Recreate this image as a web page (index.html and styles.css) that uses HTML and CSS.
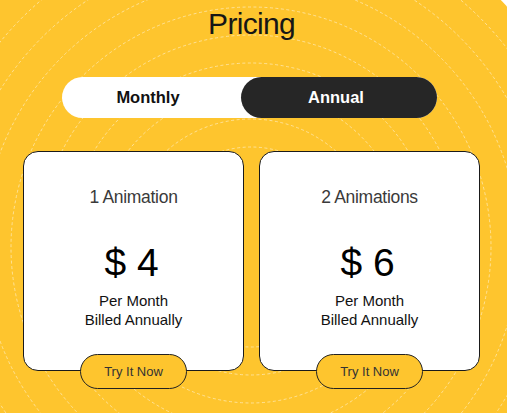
FILE: index.html
```html
<!DOCTYPE html>
<html lang="en">
<head>
<meta charset="utf-8">
<title>Pricing</title>
<link rel="stylesheet" href="styles.css">
</head>
<body>
<svg class="backdrop" width="507" height="413" viewBox="0 0 507 413" aria-hidden="true">
  <circle cx="250" cy="247" r="352" fill="#fec52e"/>
  <g fill="none" stroke="#fff" stroke-width="0.7" stroke-dasharray="3 2.5" opacity="0.7">
    <circle cx="251" cy="247" r="100"/>
    <circle cx="251" cy="247" r="128"/>
    <circle cx="251" cy="247" r="156"/>
    <circle cx="251" cy="247" r="184"/>
    <circle cx="251" cy="247" r="212"/>
    <circle cx="251" cy="247" r="240"/>
    <circle cx="251" cy="247" r="268"/>
    <circle cx="251" cy="247" r="296"/>
    <circle cx="251" cy="247" r="324"/>
  </g>
</svg>
<main class="page">
  <h1 class="title">Pricing</h1>
  <div class="toggle">
    <button class="toggle-btn">Monthly</button>
    <button class="toggle-btn active">Annual</button>
  </div>
  <section class="cards">
    <article class="card">
      <h2 class="plan">1 Animation</h2>
      <div class="price">$ 4</div>
      <p class="note">Per Month<br>Billed Annually</p>
      <button class="try">Try It Now</button>
    </article>
    <article class="card">
      <h2 class="plan">2 Animations</h2>
      <div class="price">$ 6</div>
      <p class="note">Per Month<br>Billed Annually</p>
      <button class="try">Try It Now</button>
    </article>
  </section>
</main>
</body>
</html>
```
FILE: styles.css
```css
html, body {
  margin: 0;
  padding: 0;
}
body {
  width: 507px;
  height: 413px;
  overflow: hidden;
  position: relative;
  background: #fff;
  font-family: "Liberation Sans", Arial, sans-serif;
  color: #111;
}
.backdrop {
  position: absolute;
  left: 0;
  top: 0;
  z-index: 0;
}
.page {
  position: relative;
  z-index: 1;
  display: flex;
  flex-direction: column;
}
.title {
  margin: 0;
  padding-top: 6px;
  padding-right: 4px;
  text-align: center;
  font-size: 30px;
  line-height: 36px;
  font-weight: normal;
  letter-spacing: -0.7px;
  color: #161616;
}
.toggle {
  margin-top: 35px;
  margin-left: 62px;
  width: 375px;
  height: 41px;
  display: flex;
  background: #fff;
  border-radius: 21px;
}
.toggle-btn {
  border: 0;
  background: transparent;
  font-family: "Liberation Sans", Arial, sans-serif;
  font-weight: bold;
  font-size: 16.5px;
  color: #111;
  border-radius: 21px;
  padding: 0 7px 0 0;
  width: 179px;
  height: 41px;
}
.toggle-btn.active {
  width: 196px;
  padding: 0 6px 0 0;
  background: #262626;
  color: #fff;
}
.cards {
  margin-top: 33px;
  padding-left: 23px;
  display: flex;
  gap: 15px;
}
.card {
  width: 221px;
  height: 220px;
  box-sizing: border-box;
  background: #fff;
  border: 1px solid #1a1a1a;
  border-radius: 15px;
  display: flex;
  flex-direction: column;
  align-items: center;
  padding-top: 34px;
}
.plan {
  margin: 0;
  font-size: 17.5px;
  line-height: 22px;
  font-weight: normal;
  letter-spacing: -0.3px;
  color: #3a3a3a;
}
.price {
  margin-top: 32px;
  padding-right: 4px;
  font-size: 39px;
  line-height: 46px;
  color: #000;
}
.note {
  margin: 5px 0 0;
  font-size: 15px;
  line-height: 19px;
  text-align: center;
  color: #111;
}
.try {
  margin-top: auto;
  margin-bottom: -19px;
  width: 107px;
  height: 35px;
  box-sizing: border-box;
  border: 1px solid #222;
  border-radius: 18px;
  background: #fec52e;
  font-family: "Liberation Sans", Arial, sans-serif;
  font-size: 13px;
  color: #333;
  padding: 0;
}
```
